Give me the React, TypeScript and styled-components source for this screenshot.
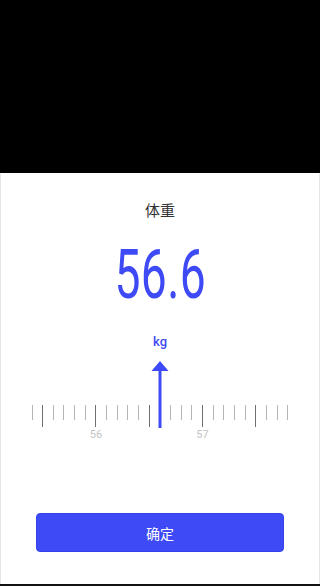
import React from "react";
import styled, { createGlobalStyle } from "styled-components";

const Global = createGlobalStyle`
  html, body { margin: 0; padding: 0; background: #000; }
  body { font-family: Roboto, "Noto Sans CJK SC", sans-serif; }
`;

const BLUE = "#3d4af6";

const Page = styled.div`
  width: 320px;
  height: 586px;
  display: flex;
  flex-direction: column;
  background: #000;
`;

const TopShade = styled.div`
  height: 173px;
  flex: none;
  background: #000;
`;

const Sheet = styled.div`
  height: 411px;
  flex: none;
  background: #fff;
  border-left: 1px solid #e6e6e6;
  border-right: 1px solid #e6e6e6;
  box-sizing: border-box;
  display: flex;
  flex-direction: column;
  align-items: center;
`;

const Title = styled.div`
  margin-top: 27px;
  font-family: "Noto Sans CJK SC", sans-serif;
  font-size: 15px;
  line-height: 20px;
  color: #333;
`;

const Value = styled.div`
  margin-top: 25px;
  font-family: Roboto, sans-serif;
  font-weight: 400;
  font-size: 68px;
  line-height: 60px;
  height: 60px;
  color: ${BLUE};
  transform: scaleX(0.68);
  letter-spacing: 0.5px;
`;

const Unit = styled.div`
  margin-top: 29px;
  font-family: Roboto, sans-serif;
  font-weight: 500;
  font-size: 13px;
  line-height: 16px;
  color: ${BLUE};
`;

const Ruler = styled.div`
  position: relative;
  margin-top: 11px;
  width: 266.67px;
  height: 84px;
`;

const TickRow = styled.div`
  position: absolute;
  left: 0;
  right: 0;
  top: 44px;
  display: flex;
`;

const TickCell = styled.div`
  width: 10.667px;
  flex: none;
  display: flex;
  flex-direction: column;
  align-items: center;
`;

const Tick = styled.div<{ $major: boolean }>`
  width: 1px;
  height: ${(p) => (p.$major ? 22 : 15)}px;
  background: ${(p) => (p.$major ? "#6f6f6f" : "#b5b5b5")};
`;

const TickLabel = styled.div`
  margin-top: 1px;
  font-family: Roboto, sans-serif;
  font-size: 11px;
  line-height: 13px;
  color: #c4c4c4;
  white-space: nowrap;
`;

const Pointer = styled.svg`
  position: absolute;
  left: 50%;
  top: 0;
  transform: translateX(-50%);
`;

const Confirm = styled.button`
  margin-top: auto;
  margin-bottom: 32px;
  width: 248px;
  height: 39px;
  border: 1px solid #3443e8;
  border-radius: 4px;
  background: ${BLUE};
  color: #fff;
  font-family: "Noto Sans CJK SC", sans-serif;
  font-size: 14px;
  padding: 0;
`;

const BottomEdge = styled.div`
  height: 2px;
  flex: none;
  background: #111;
`;

const ticks = Array.from({ length: 25 }, (_, i) => 554 + i);

export default function App() {
  return (
    <>
      <Global />
      <Page>
        <TopShade />
        <Sheet>
          <Title>体重</Title>
          <Value>56.6</Value>
          <Unit>kg</Unit>
          <Ruler>
            <TickRow>
              {ticks.map((t) => {
                const major = t % 5 === 0;
                const label = t % 10 === 0 ? String(t / 10) : null;
                return (
                  <TickCell key={t}>
                    <Tick $major={major} />
                    {label && <TickLabel>{label}</TickLabel>}
                  </TickCell>
                );
              })}
            </TickRow>
            <Pointer width="20" height="67" viewBox="0 0 20 67">
              <rect x="8.5" y="8" width="3" height="59" fill={BLUE} />
              <polygon points="10,0 18.5,10 1.5,10" fill={BLUE} />
            </Pointer>
          </Ruler>
          <Confirm>确定</Confirm>
        </Sheet>
        <BottomEdge />
      </Page>
    </>
  );
}
